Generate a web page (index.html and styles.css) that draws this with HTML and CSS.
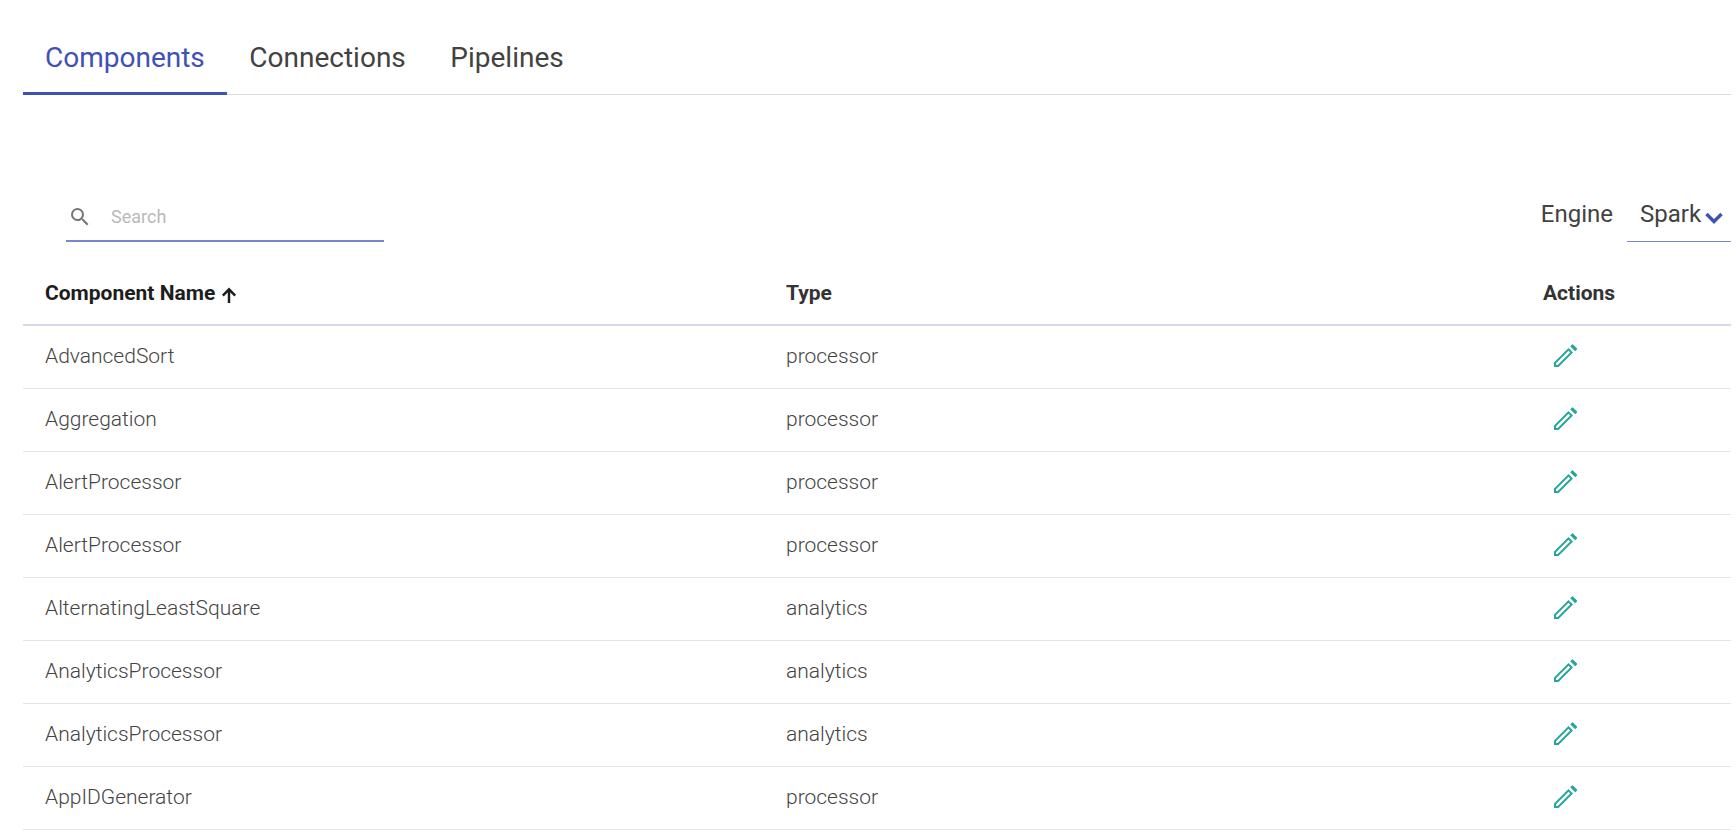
FILE: index.html
```html
<!DOCTYPE html>
<html lang="en">
<head>
<meta charset="utf-8">
<title>Components</title>
<link rel="stylesheet" href="styles.css">
</head>
<body>
<svg class="defs" width="0" height="0" aria-hidden="true">
  <symbol id="pencil" viewBox="0 0 24 24">
    <path fill-rule="evenodd" d="M0 23v-4.5L14.5 4 19 8.5 4.5 23H0zm2-2h1.7L16.2 8.5 14.5 6.8 2 19.3V21z" fill="currentColor"/>
    <path d="M16.2 2.3L17.8.7a1 1 0 0 1 1.4 0l3.6 3.6a1 1 0 0 1 0 1.4l-1.6 1.6-5-5z" fill="currentColor"/>
  </symbol>
</svg>
<nav class="tabs">
  <a class="tab active">Components</a>
  <a class="tab">Connections</a>
  <a class="tab">Pipelines</a>
</nav>
<div class="toolbar">
  <label class="search">
    <svg class="search-icon" viewBox="0 0 24 24"><path d="M15.5 14h-.79l-.28-.27A6.47 6.47 0 0 0 16 9.5 6.5 6.5 0 1 0 9.5 16c1.61 0 3.09-.59 4.23-1.57l.27.28v.79l5 4.99L20.49 19l-4.99-5zm-6 0C7.01 14 5 11.99 5 9.5S7.01 5 9.5 5 14 7.01 14 9.5 11.99 14 9.5 14z" fill="currentColor"/></svg>
    <span class="placeholder">Search</span>
  </label>
  <div class="engine">
    <span class="engine-label">Engine</span>
    <div class="select">
      <span>Spark</span>
      <svg class="chevron" viewBox="0 0 18 12"><path d="M1.5 2l7.5 7.5L16.5 2" fill="none" stroke="currentColor" stroke-width="3.4"/></svg>
    </div>
  </div>
</div>
<div class="table">
  <div class="row head">
    <div class="cell name">Component Name <svg class="sort" viewBox="0 0 16 16"><path d="M8 15V3M2.5 8.5L8 3l5.5 5.5" fill="none" stroke="currentColor" stroke-width="2.2"/></svg></div>
    <div class="cell type">Type</div>
    <div class="cell actions">Actions</div>
  </div>
  <div class="row"><div class="cell name">AdvancedSort</div><div class="cell type">processor</div><div class="cell actions"><svg class="edit"><use href="#pencil"/></svg></div></div>
  <div class="row"><div class="cell name">Aggregation</div><div class="cell type">processor</div><div class="cell actions"><svg class="edit"><use href="#pencil"/></svg></div></div>
  <div class="row"><div class="cell name">AlertProcessor</div><div class="cell type">processor</div><div class="cell actions"><svg class="edit"><use href="#pencil"/></svg></div></div>
  <div class="row"><div class="cell name">AlertProcessor</div><div class="cell type">processor</div><div class="cell actions"><svg class="edit"><use href="#pencil"/></svg></div></div>
  <div class="row"><div class="cell name">AlternatingLeastSquare</div><div class="cell type">analytics</div><div class="cell actions"><svg class="edit"><use href="#pencil"/></svg></div></div>
  <div class="row"><div class="cell name">AnalyticsProcessor</div><div class="cell type">analytics</div><div class="cell actions"><svg class="edit"><use href="#pencil"/></svg></div></div>
  <div class="row"><div class="cell name">AnalyticsProcessor</div><div class="cell type">analytics</div><div class="cell actions"><svg class="edit"><use href="#pencil"/></svg></div></div>
  <div class="row"><div class="cell name">AppIDGenerator</div><div class="cell type">processor</div><div class="cell actions"><svg class="edit"><use href="#pencil"/></svg></div></div>
</div>
</body>
</html>
```
FILE: styles.css
```css
* { box-sizing: border-box; }
html, body { margin: 0; height: 100%; overflow: hidden; background: #fff; }
body { padding: 0 5px 0 23px; font-family: Roboto, "Liberation Sans", sans-serif; color: #333; }
.defs { position: absolute; }
.tabs { display: flex; height: 95px; padding-top: 33px; border-bottom: 1px solid #dcdcdc; }
.tab { height: 62px; padding: 7px 22.5px 0 22px; font-size: 28px; line-height: 36px; color: #424242; }
.tab.active { color: #3f51b5; border-bottom: 3px solid #3f51b5; }
.toolbar { display: flex; justify-content: space-between; align-items: flex-end; height: 146px; }
.search { display: flex; align-items: center; width: 318px; height: 44px; margin-left: 43px; margin-bottom: -1px; padding-bottom: 5px; border-bottom: 2px solid #7986cb; }
.search-icon { width: 24px; height: 24px; margin-left: 2px; color: #757575; }
.placeholder { margin-left: 19px; font-size: 18px; color: #b9b9b9; }
.engine { display: flex; align-items: flex-end; }
.engine-label { margin-bottom: 12px; font-size: 24px; line-height: 30px; color: #424242; }
.select { display: flex; align-items: center; width: 104px; height: 47px; margin-left: 14px; margin-bottom: -1px; padding: 0 0 8px 13px; border-bottom: 1px solid #7986cb; font-size: 24px; color: #424242; }
.chevron { flex: none; width: 18px; height: 12px; margin: 8px 0 0 4px; color: #3f51b5; }
.table { display: flex; flex-direction: column; }
.row { display: flex; align-items: center; height: 63px; padding-bottom: 2px; border-bottom: 1px solid #e4e4e4; font-size: 21px; font-weight: 300; color: #444; }
.row.head { height: 85px; padding: 20px 0 0; border-bottom: 2px solid #d5d8e8; font-weight: 700; color: #333; }
.cell { padding-left: 22px; }
.name { width: 741px; }
.head .name { color: #1d1d1d; }
.type { width: 757px; }
.actions { flex: 1; }
.sort { width: 18px; height: 18px; vertical-align: -4px; color: #1d1d1d; }
.edit { display: block; width: 24px; height: 24px; margin-left: 11px; color: #26a69a; }
```
